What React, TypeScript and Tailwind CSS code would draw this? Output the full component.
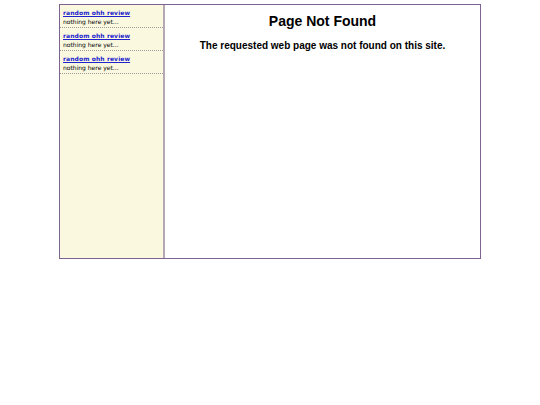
import React from 'react';

const posts = [1, 2, 3];

const SideItem: React.FC = () => (
  <div className="border-b border-dotted border-[#9a9a9a] px-[3px] pt-[3px] pb-[1px] leading-[9px]">
    <a href="#" className="block text-[6px] font-bold tracking-[0.1px] text-[#2222cc] underline">random ohh review</a>
    <div className="text-[6px] text-black">nothing here yet...</div>
  </div>
);

const App: React.FC = () => {
  return (
    <div className="min-h-[405px] bg-white pt-[4px]">
      <div className="mx-auto flex h-[255px] w-[422px] border border-[#7e6390]">
        <aside className="w-[105px] shrink-0 border-r-2 border-[#b7a9b4] bg-[#faf9e0] font-['DejaVu_Sans',sans-serif]">
          {posts.map(p => (
            <SideItem key={p} />
          ))}
        </aside>
        <main className="flex-1 pt-[8px] text-center font-['Liberation_Sans',Arial,sans-serif] font-bold text-black">
          <h1 className="text-[14px] leading-[16px]">Page Not Found</h1>
          <p className="mt-[11px] text-[10px] leading-[12px]">The requested web page was not found on this site.</p>
        </main>
      </div>
    </div>
  );
};

export default App;
